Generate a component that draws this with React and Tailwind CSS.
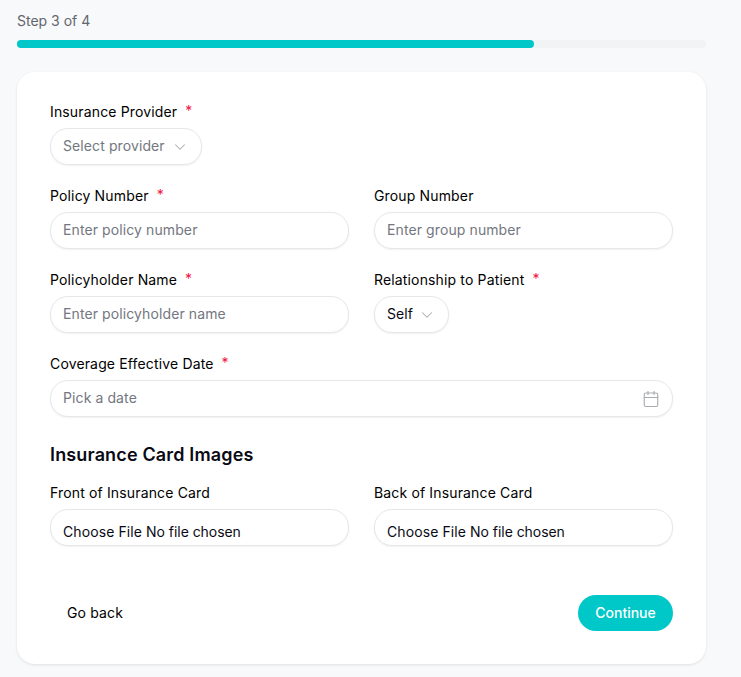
import React from "react";
import { ChevronDown, Calendar } from "lucide-react";

const controlClass =
  "h-[37px] rounded-[18px] border border-[#e5e7eb] bg-white px-3 text-sm tracking-[0.1px] shadow-[0_1px_2px_rgba(0,0,0,0.06)]";

function Field({ label, required, children }) {
  return (
    <div className="flex flex-col gap-[6px]">
      <label className="flex h-5 items-center text-sm font-normal leading-5 tracking-[0.15px] text-black">
        {label}
        {required && <span className="ml-[8px] -mt-[2px] text-[#f0113f]">*</span>}
      </label>
      {children}
    </div>
  );
}

function Select({ value, placeholder, width }) {
  return (
    <button
      type="button"
      className={`${controlClass} flex items-center justify-between !pr-3 ${width} ${
        placeholder ? "text-[#737780]" : "text-[#0a0a14]"
      }`}
    >
      <span className="-mt-[1px]">{value}</span>
      <ChevronDown className="h-[18px] w-[18px] text-[#a8abb0]" strokeWidth={1.4} />
    </button>
  );
}

function TextInput({ placeholder }) {
  return (
    <input
      type="text"
      placeholder={placeholder}
      className={`${controlClass} w-full pb-[2px] outline-none placeholder:text-[#737780]`}
    />
  );
}

function FileInput() {
  return (
    <input
      type="file"
      className={`${controlClass} w-full overflow-hidden pt-[12px] !tracking-[-0.05px] text-[#0a0a14] file:mr-1 file:border-0 file:bg-transparent file:p-0 file:text-sm file:font-normal file:tracking-[0.1px] file:text-[#0a0a14]`}
    />
  );
}

export default function App() {
  return (
    <div
      className="min-h-[677px] bg-[#f8f9fb] pl-[17px] pr-[35px] pt-[11px]"
      style={{ fontFamily: "Inter, 'Noto Sans', sans-serif" }}
    >
      <p className="h-5 text-sm leading-5 text-[#62666e]">Step 3 of 4</p>
      <div className="mt-[9px] h-2 w-full rounded-full bg-[#f1f3f5]">
        <div className="h-2 w-3/4 rounded-full bg-[#00c8c8]" />
      </div>

      <div className="mt-6 h-[592px] rounded-[18px] bg-white px-[33px] pt-[30px] shadow-[0_1px_3px_rgba(0,0,0,0.1)]">
        <div className="flex flex-col gap-[21px]">
          <Field label="Insurance Provider" required>
            <Select value="Select provider" placeholder width="w-[152px]" />
          </Field>
          <div className="grid grid-cols-2 gap-x-[25px]">
            <Field label="Policy Number" required>
              <TextInput placeholder="Enter policy number" />
            </Field>
            <Field label="Group Number">
              <TextInput placeholder="Enter group number" />
            </Field>
          </div>
          <div className="grid grid-cols-2 gap-x-[25px]">
            <Field label="Policyholder Name" required>
              <TextInput placeholder="Enter policyholder name" />
            </Field>
            <Field label="Relationship to Patient" required>
              <Select value="Self" width="w-[75px]" />
            </Field>
          </div>
          <Field label="Coverage Effective Date" required>
            <div className={`${controlClass} flex items-center justify-between text-[#737780]`}>
              <span className="-mt-[2px]">Pick a date</span>
              <Calendar className="h-[18px] w-[18px] text-[#a8abb0]" strokeWidth={1.5} />
            </div>
          </Field>
        </div>

        <h3 className="mt-[24px] h-7 text-lg font-semibold leading-7 tracking-[0.15px] text-[#0a0a14]">
          Insurance Card Images
        </h3>
        <div className="mt-[14px] grid grid-cols-2 gap-x-[25px]">
          <Field label="Front of Insurance Card">
            <FileInput />
          </Field>
          <Field label="Back of Insurance Card">
            <FileInput />
          </Field>
        </div>

        <div className="mt-[49px] flex items-center justify-between">
          <button type="button" className="h-9 px-[17px] text-sm font-normal tracking-[0.15px] text-black">
            Go back
          </button>
          <button
            type="button"
            className="h-9 w-[95px] rounded-full bg-[#00c8c8] text-sm font-medium text-white"
          >
            Continue
          </button>
        </div>
      </div>
    </div>
  );
}
